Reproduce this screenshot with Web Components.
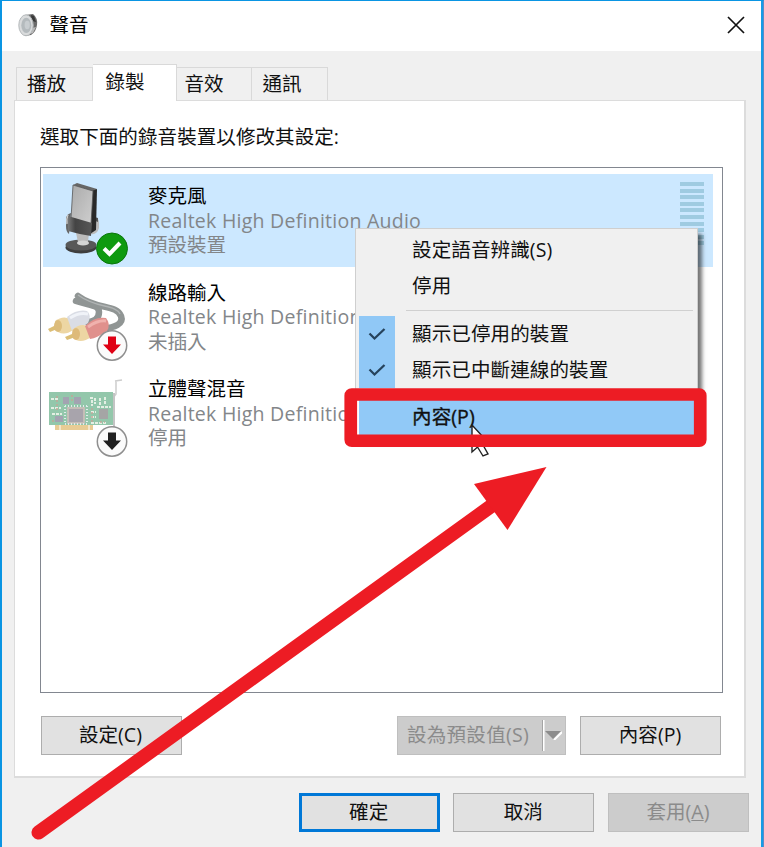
<!DOCTYPE html>
<html lang="zh-Hant">
<head>
<meta charset="utf-8">
<title>聲音</title>
<style>
html,body{margin:0;padding:0;width:764px;height:847px;overflow:hidden;background:#f0f0f0}
body{font:19.55px/24px "Open Sans","Noto Sans CJK TC",sans-serif;color:#101010}
</style>
</head>
<body>
<sound-dialog></sound-dialog>
<script>
function define(name, html, setup) {
  const t = document.createElement('template');
  t.innerHTML = html;
  customElements.define(name, class extends HTMLElement {
    constructor() {
      super();
      this.attachShadow({mode: 'open'}).appendChild(t.content.cloneNode(true));
      if (setup) setup(this, this.shadowRoot);
    }
  });
}

define('title-bar', `
<style>
:host{display:flex;align-items:center;height:50px;box-sizing:border-box;background:#fff;padding:0 16px 2px 16px}
.t{flex:1;margin-left:11.5px;color:#000}
svg{display:block}
</style>
<svg width="20" height="24" viewBox="0 0 20 24">
  <path d="M7 2 L15 1 Q20 5 19 12 Q18 19 13 22 L7 23Z" fill="#6a6a6a"/>
  <path d="M13 2 L16 3 L18 9 L14 8Z" fill="#383838"/><path d="M14 15 L18 14 L15 20 L12 21Z" fill="#b9b9b9"/>
  <ellipse cx="8" cy="12.3" rx="7.2" ry="10.500" fill="#d9dbdc" stroke="#b4b8ba" stroke-width="1"/>
  <ellipse cx="8.300" cy="12.300" rx="5" ry="7.600" fill="#b4babd"/>
  <ellipse cx="9.200" cy="12" rx="2.600" ry="4.200" fill="#c8cdd0"/>
</svg>
<span class="t"><slot></slot></span>
<svg width="18" height="18" viewBox="0 0 18 18"><path d="M1 1L17 17M17 1L1 17" stroke="#111" stroke-width="1.7" fill="none"/></svg>`);

define('tab-item', `
<style>
:host{display:block;box-sizing:border-box;width:75.5px;height:33px;border:1px solid #d9d9d9;border-left:0;border-bottom:0;background:#f0f0f0;padding:4px 0 0 8px}
:host([first]){width:77px;border-left:1px solid #d9d9d9;padding-left:10px}
:host([active]){width:83.5px;height:37.5px;background:#fff;padding:5px 0 0 12.5px;margin-bottom:-1px;z-index:1}
:host([last]){padding-left:10.5px}
</style><slot></slot>`);

define('tab-strip', `
<style>:host{display:flex;align-items:flex-end;height:37px;padding-left:2px}</style><slot></slot>`);

define('push-button', `
<style>
:host{display:flex;box-sizing:border-box;width:141px;height:39px;align-items:center;justify-content:center;background:#e1e1e1;border:1.5px solid #adadad;padding:0 1px 1px 0}
:host([default]){border:3px solid #0078d7}
:host([disabled]){background:#ccc;border-color:#bfbfbf;color:#8b8b8b}
:host([split]){width:169px;justify-content:space-between;padding:0 0 1px 9.5px;letter-spacing:.25px}
.d{display:none}
:host([split]) .d{display:flex;align-items:center;height:31px;border-left:1.5px solid #a4a4a4;box-shadow:inset 1.5px 0 #fff;width:22px;justify-content:center}
</style><span><slot></slot></span><span class="d"><svg width="17" height="10" viewBox="0 0 17 10"><path d="M9 10L17 2" stroke="#fff" stroke-width="2"/><path d="M0 1H16L8 9Z" fill="#8c8c8c"/></svg></span>`);

define('device-icon', `
<style>:host{display:block;width:88px;height:92px}svg{display:block}svg>g:not(.on){display:none}</style>
<svg width="88" height="92" viewBox="0 0 88 92">
<defs><linearGradient id="m" x2="1" y2="1"><stop stop-color="#aaa"/><stop offset="1" stop-color="#cfcfcf"/></linearGradient>
<linearGradient id="k" x2="1"><stop stop-color="#777"/><stop offset=".3" stop-color="#444"/><stop offset="1" stop-color="#575757"/></linearGradient></defs>
<g id="mic">
  <path d="M26 60q-3-2-3-8v-8q1-4 5-5z" fill="#666"/><path d="M25 41q-2 4-1 9" stroke="#ccc" stroke-width="1.500" fill="none"/>
  <path d="M50 45q5-3 6 3v6q-2 7-8 6z" fill="#bcbcbc"/><path d="M51 43l4 1v4l-5-2z" fill="#555"/>
  <ellipse cx="38" cy="73.500" rx="15.500" ry="6" fill="#3e3e3e"/><ellipse cx="38" cy="71" rx="15.500" ry="5.500" fill="#585858"/>
  <path d="M33 59h13l-1 9q-6 4-10 0z" fill="#bbb"/><ellipse cx="40" cy="69" rx="6" ry="2.500" fill="#d5d5d5"/>
  <path d="M30 11L34 9L54 15L50 18Z" fill="#666"/><path d="M49 17L54 15L53 56L47 60Z" fill="#292929"/>
  <path d="M30 11L50 17L48 50L28 45Z" fill="url(#m)" stroke="#555" stroke-width=".8"/>
  <path d="M25 42L49 49L48 62Q35 60 25 57Z" fill="url(#k)"/>
</g>
<g id="line" opacity=".9"><g transform="translate(0,9)">
  <path d="M33 25 C49 30 56 29 56 36 C56 44 50 46 44 46 M35 20 C54 34 73 28 78 40 C81 48 71 52 61 52" transform="translate(0,-4)" fill="none" stroke="#848a89" stroke-width="6.500" stroke-linecap="round"/>
  <path d="M35 15 C54 29 72 24 77 34" fill="none" stroke="#a8acac" stroke-width="1.500"/>
  <path d="M5 49L17 43L19 47L7 52Z" fill="#d9b868"/><path d="M12 41Q20 35 27 39L30 50Q22 56 15 52Z" fill="#ecd29a"/><ellipse cx="15" cy="46" rx="4" ry="6" fill="#d9b56d"/>
  <path d="M24 37Q34 29 44 31Q49 35 45 43Q34 51 29 51Z" fill="#d6dae3"/><path d="M27 38Q36 32 45 34" stroke="#eff2f8" stroke-width="3" fill="none"/>
  <path d="M22 57L36 51L38 55L24 60Z" fill="#d9b868"/><path d="M29 50Q37 43 44 46L48 57Q40 63 33 60Z" fill="#ecd29a"/><ellipse cx="33" cy="54" rx="4" ry="6" fill="#dbb36b"/>
  <path d="M42 46Q52 36 63 38Q68 44 64 51Q54 58 47 59Z" fill="#dd8580"/><path d="M45 47Q55 40 63 41" stroke="#efaaa5" stroke-width="3" fill="none"/>
</g></g>
<g id="card" opacity=".58"><g transform="translate(0,11)">
  <path d="M72 3l7-1M73 3v13l-3 4" stroke="#aaa" stroke-width="1.500" fill="none"/><path d="M71 15v34" stroke="#9b9b9b" stroke-width="2"/>
  <path d="M6 14H70V47H6Z" fill="#47a06f"/><path d="M12 47H50V52H12Z" fill="#d9a849"/><path d="M17 47v5M46 47v5" stroke="#fff"/>
  <path d="M24 29h18v17H24z" fill="#9b9185"/><path d="M26 31h14v13H26z" fill="#6a6472"/><path d="M56 31h9v10H56z" fill="#666"/>
  <path d="M20 19h6v7h-6zM31 19h7v7h-7zM12 38h8v6h-8z" fill="#61627a"/>
  <path d="M22 28h22M22 46h22M22 28v18M44 28v18" stroke="#cdd" stroke-dasharray="1 2" stroke-width="2"/>
  <path d="M8 21h8M8 30h10M9 36h10M47 20h2v8M52 20v6M57 20v7M62 19v7M48 34h5M48 39h5M48 45h16M54 29h14" stroke="#d1e4cf" stroke-width="2" stroke-dasharray="3 1" fill="none"/>
  <path d="M14 18v16M29 17v8M49 30v14M9 43h4M57 44h5" stroke="#98664f" stroke-width="1.500" stroke-dasharray="2 2" fill="none"/>
</g></g>
<g id="ok"><circle cx="69" cy="74.500" r="15.500" fill="#0f9a10" stroke="#0b770d"/><path d="M61 74.500L66.500 80L77 69" stroke="#fff" stroke-width="4" fill="none"/></g>
<g id="arrow"><circle cx="69" cy="74.500" r="14.700" fill="#fbfbfb" stroke="#8f8f8f" stroke-width="1.500"/><path d="M65 65.500H73V73.500H78L69 83L60 73.500H65Z" fill="currentColor"/></g>
</svg>`);

define('device-row', `
<style>
:host{display:flex;box-sizing:border-box;width:670px;height:93px;margin-bottom:3.6px}
:host([selected]){background:#cce8ff}
.x{flex:1;padding:10px 0 0 17.4px;line-height:24.5px;color:#838689;white-space:nowrap}
.x b{display:block;font-weight:400;color:#000}
.x i{display:block;font-style:normal}.x .n{letter-spacing:.24px}
.m{display:none}
:host([selected]) .m{display:flex;flex-direction:column;gap:2.6px;padding:8px 9px 0 0}
.m span{width:24px;height:4px;background:#9fcbe1}
</style>
<device-icon></device-icon>
<div class="x"><b><slot></slot></b><i class="n"><slot name="device">Realtek High Definition Audio</slot></i><i><slot name="state"></slot></i></div>
<div class="m"><span></span><span></span><span></span><span></span><span></span><span></span><span></span><span></span><span></span><span></span></div>`,
(host, root) => {
  const icon = root.querySelector('device-icon');
  customElements.upgrade(icon);
  const r = icon.shadowRoot;
  r.getElementById(host.getAttribute('kind')).classList.add('on');
  const c = host.getAttribute('badge');
  if (c) { r.getElementById('arrow').classList.add('on'); icon.style.color = c; }
  else r.getElementById('ok').classList.add('on');
});

define('device-list', `
<style>:host{display:block;box-sizing:border-box;width:683px;height:526px;border:1.5px solid #828790;outline:.5px solid #828790;outline-offset:-1.5px;background:#fff;padding:6px 0 0 2px}</style><slot></slot>`);

define('menu-item', `
<style>
:host{display:flex;height:36px;box-sizing:border-box;color:#111}
.g{width:36px;display:flex;align-items:center;justify-content:center;margin-right:17px}
.l{padding-top:5.5px;white-space:nowrap;letter-spacing:.1px}
svg{visibility:hidden}
:host([checked]) .g{background:#90c8f6}:host([checked]) svg{visibility:visible}
:host([hot]){background:#91c9f7}
:host([hot]) .l{-webkit-text-stroke:.35px #111}
</style><span class="g"><svg width="18" height="14" viewBox="0 0 18 14"><path d="M1.500 6.500L6.500 11.500L16.500 2" fill="none" stroke="#26435c" stroke-width="2.300"/></svg></span><span class="l"><slot></slot></span>`);

define('context-menu', `
<style>
:host{display:block;box-sizing:border-box;width:343px;height:211px;background:#f0f0f0;border:1.5px solid #cfcfcf;padding:4px 3px;box-shadow:5px 5px 4px -1px rgba(0,0,0,.55)}
hr{border:0;height:1.5px;background:#d0d0d0;margin:5px 1px 5px 47px}
</style>
<menu-item>設定語音辨識(S)</menu-item><menu-item>停用</menu-item><hr>
<menu-item checked>顯示已停用的裝置</menu-item><menu-item checked>顯示已中斷連線的裝置</menu-item><hr>
<menu-item hot>內容(P)</menu-item>`);

define('mouse-cursor', `
<style>:host{display:block}svg{display:block}</style>
<svg width="22" height="34" viewBox="0 0 22 34"><path d="M1 1V28L6.500 23L12 32L17 30L12 21H19.500Z" fill="#fff" stroke="#222" stroke-width="1.400"/></svg>`);

define('red-marks', `
<style>:host{display:block;pointer-events:none}svg{display:block}</style>
<svg width="764" height="847" viewBox="0 0 764 847">
<path d="M358 401V434.500" stroke="#fff" stroke-width="2"/>
<rect x="350.750" y="394.500" width="349.500" height="46.250" rx="1" fill="none" stroke="#ed1c24" stroke-width="12.700" stroke-linejoin="round"/>
<path d="M38.500 832.500L494 504" stroke="#ed1c24" stroke-width="14" stroke-linecap="round"/>
<path d="M546.500 467L474 484L507.500 530Z" fill="#ed1c24"/>
</svg>`);

define('sound-dialog', `
<style>
:host{display:block;position:relative;box-sizing:border-box;width:764px;height:847px;overflow:hidden;background:#f0f0f0;border:solid #0a95e3;border-width:1.5px 1px 0 2px;border-right-color:#5a8cc8}
.w{height:100%;box-sizing:border-box;border-right:2px solid #169be6}
.b{padding:12px 14px 0 12px}
.p{display:flex;flex-direction:column;box-sizing:border-box;width:732px;height:678px;background:#fff;border:1px solid #dcdcdc;border-width:1px 2px 2px 1px;padding:24px 0 0 24.500px}
.h{height:42px;padding-left:.500px;letter-spacing:.06px}
.r{display:flex;margin-top:23px;padding-left:1px;gap:14.500px}
.r push-button:first-child{margin-right:200.500px}
.f{display:flex;gap:13.700px;justify-content:flex-end;margin-top:15px;margin-right:-2px}
.menu,.cur,.marks{position:absolute}
.menu{left:353px;top:226.500px}.cur{left:468.500px;top:422.500px}.marks{left:-2px;top:-1px}
</style>
<div class="w">
<title-bar>聲音</title-bar>
<div class="b">
<tab-strip><tab-item first>播放</tab-item><tab-item active>錄製</tab-item><tab-item>音效</tab-item><tab-item last>通訊</tab-item></tab-strip>
<div class="p">
<div class="h">選取下面的錄音裝置以修改其設定:</div>
<device-list>
<device-row selected kind="mic">麥克風<span slot="state">預設裝置</span></device-row>
<device-row kind="line" badge="#df0014">線路輸入<span slot="state">未插入</span></device-row>
<device-row kind="card" badge="#202020">立體聲混音<span slot="device">Realtek High Definition</span><span slot="state">停用</span></device-row>
</device-list>
<div class="r"><push-button>設定(C)</push-button><push-button disabled split>設為預設值(S)</push-button><push-button>內容(P)</push-button></div>
</div>
<div class="f"><push-button default>確定</push-button><push-button>取消</push-button><push-button disabled>套用(<u>A</u>)</push-button></div>
</div>
</div>
<context-menu class="menu"></context-menu>
<mouse-cursor class="cur"></mouse-cursor>
<red-marks class="marks"></red-marks>`);
</script>
</body>
</html>
